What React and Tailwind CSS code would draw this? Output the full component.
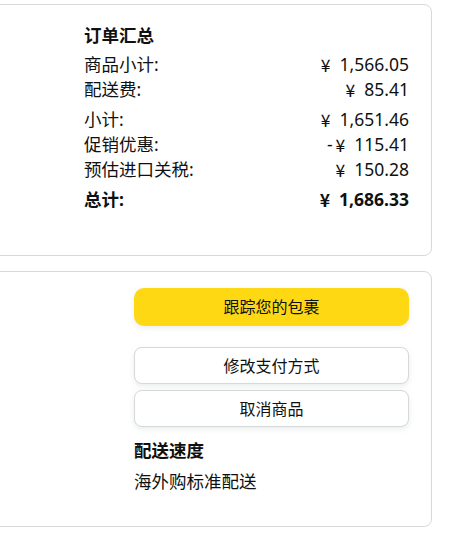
const summaryGroups = [
    [
        { label: '商品小计:', value: '1,566.05' },
        { label: '配送费:', value: '85.41' },
    ],
    [
        { label: '小计:', value: '1,651.46' },
        { label: '促销优惠:', value: '115.41', minus: true },
        { label: '预估进口关税:', value: '150.28' },
    ],
];

const font = { fontFamily: '"Noto Sans", "Noto Sans CJK SC", sans-serif' };

const Price = ({ value, minus }) => (
    <span className="flex h-[25px] items-center">
        {minus && <span className="mr-[3px]">-</span>}
        <span className="mr-[9px]" style={{ fontFamily: '"Noto Sans CJK SC", sans-serif' }}>¥</span>
        <span>{value}</span>
    </span>
);

const App = () => {
    return (
        <div className="min-h-[537px] bg-white pt-1 text-[#0f1111]" style={font}>
            <div className="-ml-4 w-[448px] rounded-lg border border-[#d5d9d9] pb-[43px] pl-[99px] pr-[22px] pt-[17px]">
                <h2 className="text-[17.5px] font-bold leading-[26px]">订单汇总</h2>
                <div className="mt-1 flex flex-col gap-[5px] text-[17.5px] leading-[25px]">
                    {summaryGroups.map((group, i) => (
                        <div key={i}>
                            {group.map((row) => (
                                <div key={row.label} className="flex h-[25px] items-center justify-between overflow-hidden">
                                    <span>{row.label}</span>
                                    <Price value={row.value} minus={row.minus} />
                                </div>
                            ))}
                        </div>
                    ))}
                    <div className="flex h-[25px] items-center justify-between overflow-hidden font-bold">
                        <span>总计:</span>
                        <Price value="1,686.33" />
                    </div>
                </div>
            </div>

            <div className="-ml-4 mt-[15px] w-[448px] rounded-lg border border-[#d5d9d9] pb-[32px] pl-[149px] pr-[22px] pt-4">
                <button className="flex h-[38px] w-full items-center justify-center rounded-[10px] bg-[#ffd814] text-[16px] shadow-[0_2px_5px_rgba(213,217,217,0.5)]">
                    跟踪您的包裹
                </button>
                <button className="mt-[21px] flex h-[37px] w-full items-center justify-center rounded-lg border border-[#d5d9d9] bg-white text-[16px] shadow-[0_2px_5px_rgba(213,217,217,0.5)]">
                    修改支付方式
                </button>
                <button className="mt-[6px] flex h-[37px] w-full items-center justify-center rounded-lg border border-[#d5d9d9] bg-white text-[16px] shadow-[0_2px_5px_rgba(213,217,217,0.5)]">
                    取消商品
                </button>
                <h3 className="mt-[11px] text-[17.5px] font-bold leading-[25px]">配送速度</h3>
                <p className="mt-[6px] text-[17.5px] leading-[25px]">海外购标准配送</p>
            </div>
        </div>
    );
};

export default App;
